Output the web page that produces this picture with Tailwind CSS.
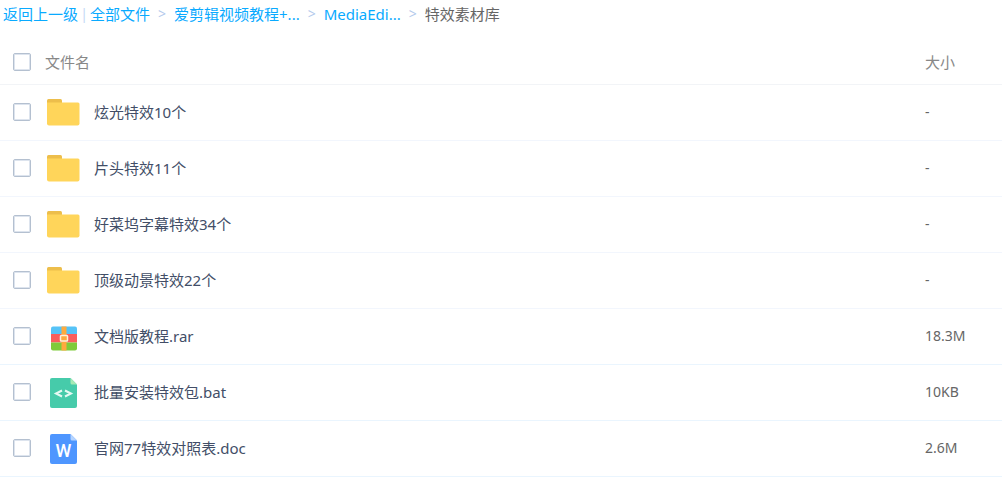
<!DOCTYPE html>
<html lang="zh-CN">
<head>
  <meta charset="UTF-8" />
  <meta name="viewport" content="width=device-width, initial-scale=1.0"/>
  <title>特效素材库</title>

  <script src="https://cdn.jsdelivr.net/npm/@tailwindcss/browser@4"></script>
  <style>
    body {
      font-family: 'Noto Sans', 'Noto Sans CJK SC', sans-serif;
    }
  </style>
</head>
<body class="bg-white text-[15px] leading-5 text-[#424e67]">
  <!-- Shared icons -->
  <svg class="hidden">
    <symbol id="icon-folder" viewBox="0 0 35 30">
      <path d="M2 12V3.500Q2 2 3.500 2H15.500Q17 2 17 3.500V12Z" fill="#edbe4b"/>
      <path d="M2 5.500H33Q34.500 5.500 34.500 7V26.500Q34.500 28.500 32.500 28.500H4Q2 28.500 2 26.500Z" fill="#ffd55a"/>
    </symbol>
  </svg>

  <!-- Breadcrumb -->
  <nav class="flex h-10 items-start whitespace-nowrap pl-[3px] pt-1 text-[#09aaff]">
    <a href="#">返回上一级</a>
    <span class="w-3 text-center text-sm text-[#c4d8f6]">|</span>
    <a href="#">全部文件</a>
    <span class="w-6 text-center text-sm text-[#b4caec]">&gt;</span>
    <a href="#">爱剪辑视频教程+...</a>
    <span class="w-6 text-center text-sm text-[#b4caec]">&gt;</span>
    <a href="#">MediaEdi...</a>
    <span class="w-6 text-center text-sm text-[#b4caec]">&gt;</span>
    <span class="text-[#666]">特效素材库</span>
  </nav>

  <!-- File list -->
  <table class="w-full table-fixed border-collapse text-left">
    <colgroup>
      <col class="w-[45px]">
      <col>
      <col class="w-[77px]">
    </colgroup>
    <thead class="text-[#888]">
      <tr class="h-11 border-b border-[#f2f4f7]">
        <th class="pl-[13px]"><input type="checkbox" aria-label="全选" class="block size-[18px] appearance-none rounded-xs border border-[#b4c0d0] bg-white inset-ring inset-ring-[#dde4ee] checked:bg-[#09aaff]"></th>
        <th class="font-normal">文件名</th>
        <th class="font-normal">大小</th>
      </tr>
    </thead>
    <tbody>
      <tr class="h-14 border-b border-[#f2f6fd]">
        <td class="pl-[13px]"><input type="checkbox" id="file-1" class="block size-[18px] appearance-none rounded-xs border border-[#b4c0d0] bg-white inset-ring inset-ring-[#dde4ee] checked:bg-[#09aaff]"></td>
        <td>
          <label for="file-1" class="flex items-center gap-[14px]">
            <svg class="h-[30px] w-[35px]"><use href="#icon-folder"/></svg>
            炫光特效10个
          </label>
        </td>
        <td class="text-sm text-[#666]">-</td>
      </tr>
      <tr class="h-14 border-b border-[#f2f6fd]">
        <td class="pl-[13px]"><input type="checkbox" id="file-2" class="block size-[18px] appearance-none rounded-xs border border-[#b4c0d0] bg-white inset-ring inset-ring-[#dde4ee] checked:bg-[#09aaff]"></td>
        <td>
          <label for="file-2" class="flex items-center gap-[14px]">
            <svg class="h-[30px] w-[35px]"><use href="#icon-folder"/></svg>
            片头特效11个
          </label>
        </td>
        <td class="text-sm text-[#666]">-</td>
      </tr>
      <tr class="h-14 border-b border-[#f2f6fd]">
        <td class="pl-[13px]"><input type="checkbox" id="file-3" class="block size-[18px] appearance-none rounded-xs border border-[#b4c0d0] bg-white inset-ring inset-ring-[#dde4ee] checked:bg-[#09aaff]"></td>
        <td>
          <label for="file-3" class="flex items-center gap-[14px]">
            <svg class="h-[30px] w-[35px]"><use href="#icon-folder"/></svg>
            好菜坞字幕特效34个
          </label>
        </td>
        <td class="text-sm text-[#666]">-</td>
      </tr>
      <tr class="h-14 border-b border-[#f2f6fd]">
        <td class="pl-[13px]"><input type="checkbox" id="file-4" class="block size-[18px] appearance-none rounded-xs border border-[#b4c0d0] bg-white inset-ring inset-ring-[#dde4ee] checked:bg-[#09aaff]"></td>
        <td>
          <label for="file-4" class="flex items-center gap-[14px]">
            <svg class="h-[30px] w-[35px]"><use href="#icon-folder"/></svg>
            顶级动景特效22个
          </label>
        </td>
        <td class="text-sm text-[#666]">-</td>
      </tr>
      <tr class="h-14 border-b border-[#eaf5fe]">
        <td class="pl-[13px]"><input type="checkbox" id="file-5" class="block size-[18px] appearance-none rounded-xs border border-[#b4c0d0] bg-white inset-ring inset-ring-[#dde4ee] checked:bg-[#09aaff]"></td>
        <td>
          <label for="file-5" class="flex items-center gap-[14px]">
            <svg class="h-8 w-[35px]" viewBox="0 -2 35 32">
              <path d="M6 12V6.500Q6 4.500 8 4.500H30Q32 4.500 32 6.500V12Z" fill="#56c3f7"/>
              <path d="M6 12H32V20.500H6Z" fill="#fa5e5c"/>
              <path d="M6 20.500H32V26.500Q32 28.500 30 28.500H8Q6 28.500 6 26.500Z" fill="#7fcb3a"/>
              <path d="M16.500 4.500H21.500V28.500H16.500Z" fill="#ffaa3e"/>
              <rect x="15.500" y="13.500" width="7" height="5.500" rx="0.800" fill="#ffaa3e" stroke="#fff0dc" stroke-width="1.500"/>
            </svg>
            文档版教程.rar
          </label>
        </td>
        <td class="text-sm text-[#666]">18.3M</td>
      </tr>
      <tr class="h-14 border-b border-[#eaf5fe]">
        <td class="pl-[13px]"><input type="checkbox" id="file-6" class="block size-[18px] appearance-none rounded-xs border border-[#b4c0d0] bg-white inset-ring inset-ring-[#dde4ee] checked:bg-[#09aaff]"></td>
        <td>
          <label for="file-6" class="flex items-center gap-[14px]">
            <svg class="h-8 w-[35px]" viewBox="0 -2 35 32">
              <path d="M7 0H25.500L32 6.500V28Q32 30 30 30H7Q5 30 5 28V2Q5 0 7 0Z" fill="#46cbaa"/>
              <path d="M25.500 0L32 6.500H27Q25.500 6.500 25.500 5Z" fill="#a5eab5"/>
              <path d="M17 12.500L11 15.500L17 18.500M20 12.500L26 15.500L20 18.500" fill="none" stroke="#e5faf3" stroke-width="2"/>
            </svg>
            批量安装特效包.bat
          </label>
        </td>
        <td class="text-sm text-[#666]">10KB</td>
      </tr>
      <tr class="h-14 border-b border-[#eaf5fe]">
        <td class="pl-[13px]"><input type="checkbox" id="file-7" class="block size-[18px] appearance-none rounded-xs border border-[#b4c0d0] bg-white inset-ring inset-ring-[#dde4ee] checked:bg-[#09aaff]"></td>
        <td>
          <label for="file-7" class="flex items-center gap-[14px]">
            <svg class="h-8 w-[35px]" viewBox="0 -2 35 32">
              <path d="M7 0H25.500L32 6.500V28Q32 30 30 30H7Q5 30 5 28V2Q5 0 7 0Z" fill="#4e96ff"/>
              <path d="M25.500 0L32 6.500H27Q25.500 6.500 25.500 5Z" fill="#b5d4ff"/>
              <text x="18.500" y="23" text-anchor="middle" font-family="Roboto, sans-serif" font-size="18" font-weight="500" fill="#fff">W</text>
            </svg>
            官网77特效对照表.doc
          </label>
        </td>
        <td class="text-sm text-[#666]">2.6M</td>
      </tr>
    </tbody>
  </table>
</body>
</html>
